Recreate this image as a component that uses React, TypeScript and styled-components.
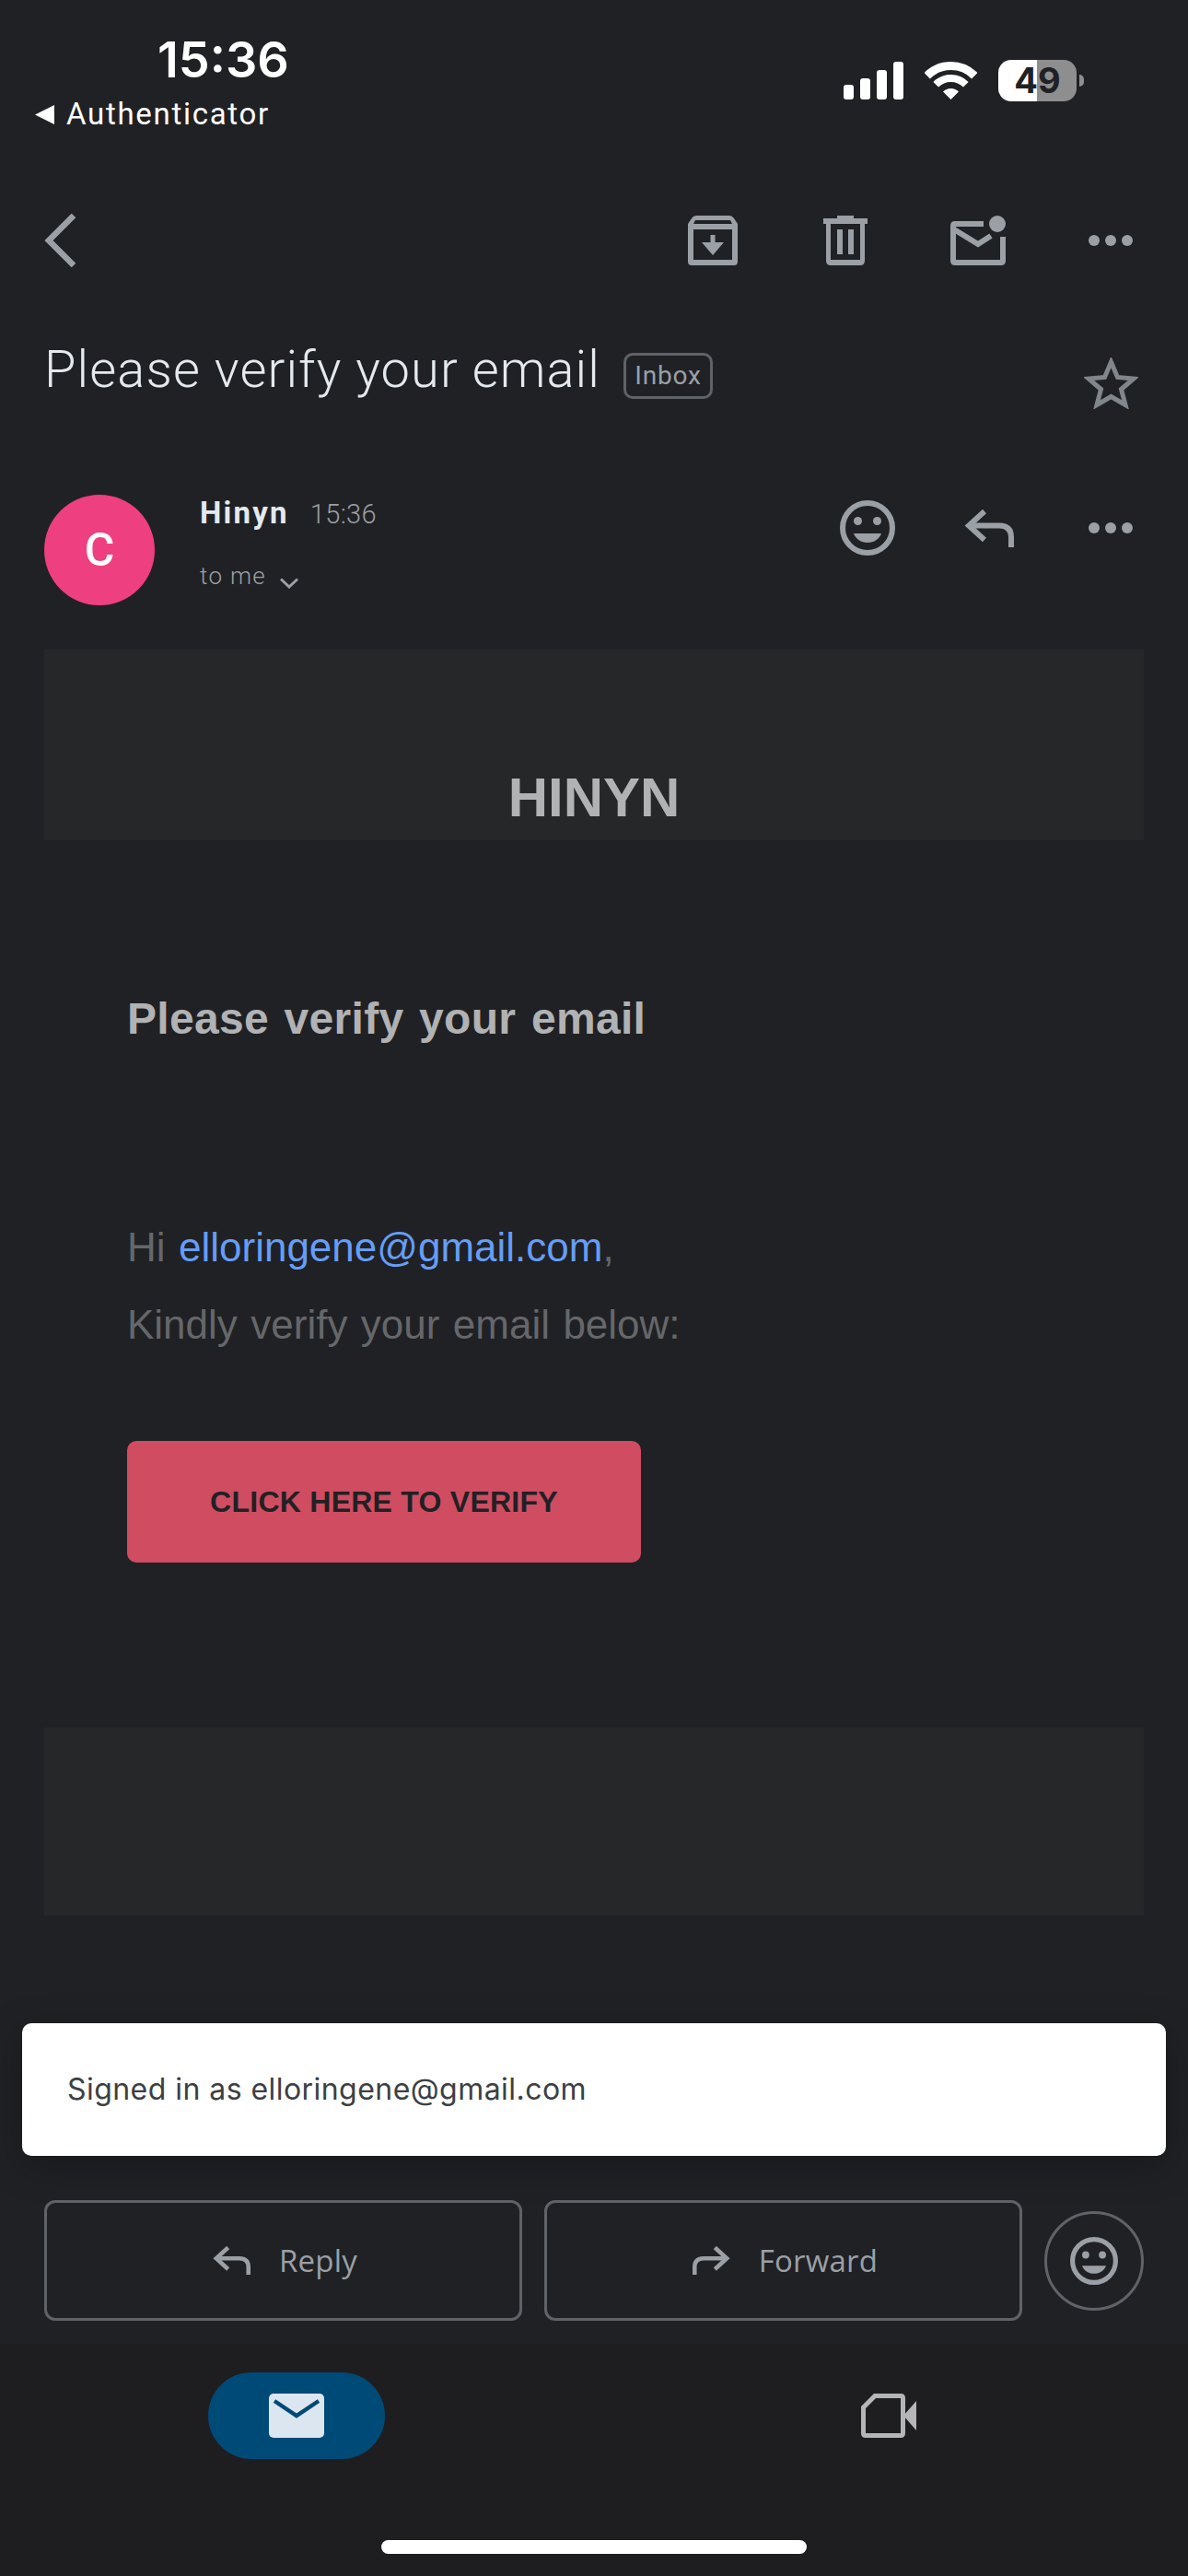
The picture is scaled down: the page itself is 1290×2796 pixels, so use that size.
import React from 'react'
import styled, { createGlobalStyle } from 'styled-components'

const ICON_GREY = '#9aa0a6'

const GlobalStyle = createGlobalStyle`
  html, body {
    margin: 0;
    padding: 0;
    background: #202124;
  }
  * {
    box-sizing: border-box;
  }
`

const EmojiIcon = ({ size }: { size: number }) => (
  <svg width={size} height={size} viewBox="0 0 60 60">
    <circle cx="30" cy="30" r="27" fill="none" stroke={ICON_GREY} strokeWidth="6" />
    <circle cx="19.5" cy="22.5" r="4.5" fill={ICON_GREY} />
    <circle cx="40.5" cy="22.5" r="4.5" fill={ICON_GREY} />
    <path d="M15 36 H45 C43 42 37 46 30 46 C23 46 17 42 15 36Z" fill={ICON_GREY} />
  </svg>
)

const ArrowIcon = ({ width, flip }: { width: number; flip?: boolean }) => (
  <FlipSvg $flip={flip} width={width} height={(width * 41) / 54} viewBox="0 0 54 41" fill="none" stroke={ICON_GREY} strokeWidth="6">
    <path d="M22 2 L5 17.5 L22 33" />
    <path d="M5 17.5 H38 Q51 17.5 51 30 V41" />
  </FlipSvg>
)

const DotsIcon = () => (
  <svg width="48" height="12" viewBox="0 0 48 12" fill={ICON_GREY}>
    <circle cx="6" cy="6" r="6" />
    <circle cx="24" cy="6" r="6" />
    <circle cx="42" cy="6" r="6" />
  </svg>
)

export default function App() {
  return (
    <>
      <GlobalStyle />
      <Page>
        <StatusBar>
          <StatusLeft>
            <Clock>15:36</Clock>
            <BackLink>
              <svg width="21" height="21" viewBox="0 0 21 21" fill="#fff">
                <path d="M0 10.5 L21 0 V21Z" />
              </svg>
              Authenticator
            </BackLink>
          </StatusLeft>
          <StatusRight>
            <svg width="65" height="41" viewBox="0 0 65 41" fill="#fff">
              <rect x="0" y="25" width="11" height="16" rx="3" />
              <rect x="18" y="18" width="11" height="23" rx="3" />
              <rect x="36" y="9" width="11" height="32" rx="3" />
              <rect x="54" y="0" width="11" height="41" rx="3" />
            </svg>
            <svg width="57" height="41" viewBox="0 0 57 41">
              <path d="M2.7 15.2 A36.5 36.5 0 0 1 54.3 15.2" fill="none" stroke="#fff" strokeWidth="9" />
              <path d="M12.2 24.7 A23 23 0 0 1 44.8 24.7" fill="none" stroke="#fff" strokeWidth="8" />
              <path d="M28.5 41 L20 32.5 A12 12 0 0 1 37 32.5Z" fill="#fff" />
            </svg>
            <Battery>49</Battery>
          </StatusRight>
        </StatusBar>

        <Toolbar>
          <svg width="35" height="58" viewBox="0 0 35 58" fill="none" stroke={ICON_GREY} strokeWidth="6.5">
            <path d="M32 2 L5 29 L32 56" />
          </svg>
          <ToolbarActions>
            <ToolButton>
              <svg width="54" height="54" viewBox="0 0 54 54" fill={ICON_GREY}>
                <path
                  fillRule="evenodd"
                  d="M9 0 H45 Q48 0 50 3 L54 9 V50 Q54 54 50 54 H4 Q0 54 0 50 V9 L4 3 Q6 0 9 0Z M8 5 L6 9 H48 L46 5Z M6 15 V48 H48 V15Z"
                />
                <path d="M24.5 21 H29.5 V29 H39 L27 43 L15 29 H24.5Z" />
              </svg>
            </ToolButton>
            <ToolButton>
              <svg width="48" height="54" viewBox="0 0 48 54" fill={ICON_GREY}>
                <path d="M15 0 H33 V3 H48 V9 H0 V3 H15Z" />
                <path
                  fillRule="evenodd"
                  d="M3 9 H45 V49 Q45 54 40 54 H8 Q3 54 3 49Z M8 9 V48 H40 V9Z"
                />
                <rect x="15" y="15" width="6" height="27" />
                <rect x="27" y="15" width="6" height="27" />
              </svg>
            </ToolButton>
            <ToolButton>
              <svg width="60" height="54" viewBox="0 0 60 54">
                <path
                  d="M36 9 H5 Q3 9 3 11 V49 Q3 51 5 51 H55 Q57 51 57 49 V23"
                  fill="none"
                  stroke={ICON_GREY}
                  strokeWidth="6"
                />
                <path d="M4 15 L30 31 L44 22" fill="none" stroke={ICON_GREY} strokeWidth="6" />
                <circle cx="51" cy="9" r="9" fill={ICON_GREY} />
              </svg>
            </ToolButton>
            <ToolButton>
              <DotsIcon />
            </ToolButton>
          </ToolbarActions>
        </Toolbar>

        <SubjectRow>
          <Subject>Please verify your email</Subject>
          <InboxChip>Inbox</InboxChip>
          <StarSlot>
            <svg width="59" height="56" viewBox="0 0 59 56" fill="none" stroke="#80868b" strokeWidth="5">
              <path d="M29.5 5 L36.5 21.5 L54 23 L40.5 34.5 L45 51.5 L29.5 42.5 L14 51.5 L18.5 34.5 L5 23 L22.5 21.5Z" />
            </svg>
          </StarSlot>
        </SubjectRow>

        <SenderRow>
          <Avatar>C</Avatar>
          <SenderInfo>
            <SenderLine>
              <SenderName>Hinyn</SenderName>
              <SentTime>15:36</SentTime>
            </SenderLine>
            <Recipient>
              to me
              <svg width="20" height="12" viewBox="0 0 20 12" fill="none" stroke={ICON_GREY} strokeWidth="3">
                <path d="M1 1.5 L10 10 L19 1.5" />
              </svg>
            </Recipient>
          </SenderInfo>
          <SenderActions>
            <SenderButton>
              <EmojiIcon size={60} />
            </SenderButton>
            <SenderButton>
              <ArrowIcon width={54} />
            </SenderButton>
            <SenderButton>
              <DotsIcon />
            </SenderButton>
          </SenderActions>
        </SenderRow>

        <MailHeader>HINYN</MailHeader>
        <MailBody>
          <MailHeading>Please verify your email</MailHeading>
          <MailText>
            Hi <MailLink>elloringene@gmail.com</MailLink>,
          </MailText>
          <MailText>Kindly verify your email below:</MailText>
          <VerifyButton>CLICK HERE TO VERIFY</VerifyButton>
        </MailBody>
        <MailFooter />

        <Snackbar>Signed in as elloringene@gmail.com</Snackbar>

        <Bottom>
          <ActionBar>
            <ActionButton>
              <ArrowIcon width={41} />
              Reply
            </ActionButton>
            <ActionButton>
              <ArrowIcon width={41} flip />
              Forward
            </ActionButton>
            <RoundButton>
              <EmojiIcon size={52} />
            </RoundButton>
          </ActionBar>
          <TabBar>
            <Tabs>
              <MailPill>
                <svg width="60" height="48" viewBox="0 0 60 48">
                  <rect width="60" height="48" rx="5" fill="#dce6f0" />
                  <path d="M6 8 L30 24 L54 8" fill="none" stroke="#004a77" strokeWidth="4.5" />
                </svg>
              </MailPill>
              <svg width="60" height="48" viewBox="0 0 60 48" fill="none">
                <path
                  d="M15 2.5 H43 Q45.5 2.5 45.5 5 V43 Q45.5 45.5 43 45.5 H5 Q2.5 45.5 2.5 43 V15Z"
                  stroke="#b4b6b8"
                  strokeWidth="5"
                />
                <path d="M46 24 L60 8 V40Z" fill="#b4b6b8" />
              </svg>
            </Tabs>
            <HomeIndicator />
          </TabBar>
        </Bottom>
      </Page>
    </>
  )
}

const Page = styled.div`
  position: relative;
  display: flex;
  flex-direction: column;
  width: 1290px;
  height: 2796px;
  overflow: hidden;
  background: #202124;
  font-family: 'Roboto', sans-serif;
`

const StatusBar = styled.div`
  display: flex;
  justify-content: space-between;
  align-items: flex-start;
  height: 180px;
  padding: 0 121px 0 38px;
`

const StatusLeft = styled.div`
  display: flex;
  flex-direction: column;
`

const Clock = styled.div`
  margin: 34px 0 0 133px;
  font: 600 54px/62px 'Inter', sans-serif;
  color: #fff;
`

const BackLink = styled.div`
  display: flex;
  align-items: center;
  gap: 13px;
  margin-top: 8px;
  font: 400 33px/40px 'Roboto', sans-serif;
  letter-spacing: 1.7px;
  color: #fff;
`

const StatusRight = styled.div`
  display: flex;
  align-items: center;
  gap: 23px;
  margin-top: 65px;
`

const Battery = styled.div`
  position: relative;
  width: 85px;
  height: 45px;
  border-radius: 14px;
  background: linear-gradient(90deg, #fff 0 42px, #8e8e8f 42px);
  font: 700 38px/45px 'Inter', sans-serif;
  text-align: center;
  color: #202124;

  &::after {
    content: '';
    position: absolute;
    top: 16px;
    left: 88px;
    width: 5px;
    height: 13px;
    border-radius: 0 5px 5px 0;
    background: #8e8e8f;
  }
`

const Toolbar = styled.div`
  display: flex;
  justify-content: space-between;
  align-items: center;
  height: 162px;
  padding: 0 12px 0 48px;
`

const ToolbarActions = styled.div`
  display: flex;
  align-items: center;
`

const ToolButton = styled.div`
  display: flex;
  justify-content: center;
  align-items: center;
  width: 144px;
`

const SubjectRow = styled.div`
  display: flex;
  align-items: center;
  height: 120px;
  padding: 0 12px 0 48px;
`

const Subject = styled.div`
  margin-top: -3px;
  font: 300 56px/64px 'Roboto', sans-serif;
  letter-spacing: 1.1px;
  color: #e3e9ee;
`

const InboxChip = styled.div`
  width: 97px;
  height: 50px;
  margin: 12px 0 0 25px;
  border: 3px solid #5f6368;
  border-radius: 10px;
  font: 400 28px/44px 'Roboto', sans-serif;
  letter-spacing: 0.8px;
  text-align: center;
  color: #9aa0a6;
`

const StarSlot = styled.div`
  display: flex;
  justify-content: center;
  width: 59px;
  margin: 28px 42px 0 auto;
`

const SenderRow = styled.div`
  display: flex;
  align-items: flex-start;
  height: 243px;
  padding: 75px 18px 0 48px;
`

const Avatar = styled.div`
  display: flex;
  justify-content: center;
  align-items: center;
  width: 120px;
  height: 120px;
  border-radius: 50%;
  background: #ee4080;
  font: 500 50px/1 'Roboto', sans-serif;
  color: #fff;
`

const SenderInfo = styled.div`
  display: flex;
  flex-direction: column;
  gap: 30px;
  margin-left: 49px;
`

const SenderLine = styled.div`
  display: flex;
  align-items: baseline;
  gap: 23px;
`

const SenderName = styled.span`
  font: 700 33px/40px 'Roboto', sans-serif;
  letter-spacing: 2.2px;
  color: #e3e9ee;
`

const SentTime = styled.span`
  font: 300 29px/40px 'Roboto', sans-serif;
  letter-spacing: 0.4px;
  color: #9aa0a6;
`

const Recipient = styled.div`
  display: flex;
  align-items: flex-end;
  gap: 15px;
  font: 300 26px/34px 'Roboto', sans-serif;
  letter-spacing: 1.3px;
  color: #9aa0a6;

  svg {
    margin-bottom: 3px;
  }
`

const SenderActions = styled.div`
  display: flex;
  align-items: center;
  height: 72px;
  margin-left: auto;
`

const SenderButton = styled.div`
  display: flex;
  justify-content: center;
  align-items: center;
  width: 132px;
`

const MailHeader = styled.div`
  display: flex;
  justify-content: center;
  align-items: flex-end;
  height: 207px;
  margin: 0 48px;
  padding-bottom: 16px;
  background: #262729;
  font: 700 60px/1 'Liberation Sans', sans-serif;
  color: #b0b2b4;
`

const MailBody = styled.div`
  display: flex;
  flex-direction: column;
  align-items: flex-start;
  height: 963px;
  padding: 166px 0 0 138px;
`

const MailHeading = styled.div`
  margin-bottom: 179px;
  font: 700 48px/55px 'Liberation Sans', sans-serif;
  letter-spacing: 0.3px;
  word-spacing: 3px;
  color: #b0b2b4;
`

const MailText = styled.div`
  font: 400 44px/84px 'Liberation Sans', sans-serif;
  word-spacing: 2.2px;
  color: #65676a;
`

const MailLink = styled.span`
  color: #669df6;
`

const VerifyButton = styled.div`
  display: flex;
  justify-content: center;
  align-items: center;
  width: 558px;
  height: 132px;
  margin-top: 84px;
  border-radius: 10px;
  background: #d04c60;
  font: 700 32px/1 'Liberation Sans', sans-serif;
  letter-spacing: 0.25px;
  color: #202124;
`

const MailFooter = styled.div`
  height: 204px;
  margin: 0 48px;
  background: #262729;
`

const Snackbar = styled.div`
  position: absolute;
  left: 24px;
  right: 24px;
  top: 2196px;
  height: 144px;
  padding-left: 49px;
  border-radius: 10px;
  background: #fff;
  box-shadow: 0 10px 40px rgba(0, 0, 0, 0.25);
  font: 400 32px/144px 'Inter', sans-serif;
  letter-spacing: 0.45px;
  color: #3c4043;
`

const Bottom = styled.div`
  margin-top: auto;
`

const ActionBar = styled.div`
  display: flex;
  align-items: center;
  gap: 24px;
  height: 131px;
  margin-bottom: 25px;
  padding: 0 48px;
`

const ActionButton = styled.div`
  display: flex;
  justify-content: center;
  align-items: center;
  gap: 31px;
  width: 519px;
  height: 131px;
  padding-left: 4px;
  border: 3px solid #5f6368;
  border-radius: 12px;
  font: 400 33px/1 'Open Sans', sans-serif;
  letter-spacing: 0.2px;
  color: #9aa0a6;
`

const FlipSvg = styled.svg<{ $flip?: boolean }>`
  transform: ${props => (props.$flip ? 'scaleX(-1)' : 'none')};
`

const RoundButton = styled.div`
  display: flex;
  justify-content: center;
  align-items: center;
  width: 108px;
  height: 108px;
  border: 3px solid #5f6368;
  border-radius: 50%;
`

const TabBar = styled.div`
  height: 252px;
  padding-top: 31px;
  background: #1e1e20;
`

const Tabs = styled.div`
  display: grid;
  grid-template-columns: 1fr 1fr;
  justify-items: center;
  align-items: center;
  height: 94px;
  padding-right: 3px;
`

const MailPill = styled.div`
  display: flex;
  justify-content: center;
  align-items: center;
  width: 192px;
  height: 94px;
  border-radius: 47px;
  background: #004a77;
`

const HomeIndicator = styled.div`
  width: 462px;
  height: 15px;
  margin: 88px auto 0;
  border-radius: 8px;
  background: #fff;
`
